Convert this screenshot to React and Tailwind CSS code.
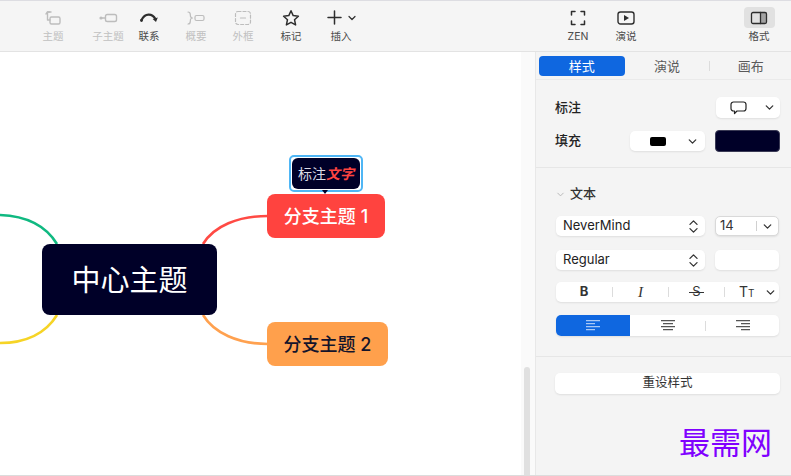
import { ChevronDown, ChevronsUpDown } from 'lucide-react';

function ToolItem({ label, dim, active, className = '', children }) {
  return (
    <div className={`w-10 shrink-0 flex flex-col items-center pt-[6px] ${className}`}>
      <div className={`w-[31px] h-[21px] flex items-center justify-center rounded ${active ? 'bg-[#e1e1e1]' : ''} ${dim ? 'text-[#bdbdbd]' : 'text-[#2e2e2e]'}`}>
        {children}
      </div>
      <span className={`mt-[2px] whitespace-nowrap text-[10.5px] leading-[14px] ${dim ? 'text-[#c0c0c0]' : 'text-[#4a4a4a]'}`}>{label}</span>
    </div>
  );
}

const Svg = ({ w = 18, h = 18, sw = 1.4, children }) => (
  <svg width={w} height={h} viewBox={`0 0 ${w} ${h}`} fill="none" stroke="currentColor" strokeWidth={sw} strokeLinecap="round" strokeLinejoin="round">
    {children}
  </svg>
);

function SelectBox({ className = '', children }) {
  return (
    <div className={`flex items-center bg-white rounded-[5px] shadow-[0_1px_2px_rgba(0,0,0,0.09)] ${className}`}>
      {children}
    </div>
  );
}

const Chev = ({ className = '' }) => <ChevronDown size={13} strokeWidth={2.4} className={`text-[#333] ${className}`} />;

const Updown = () => <ChevronsUpDown size={17} strokeWidth={1.8} className="ml-auto mr-[3px] text-[#333]" />;

const Sep = () => <div className="w-px h-[10px] bg-[#dcdcdc] shrink-0" />;

function AlignIcon({ lines, color }) {
  return (
    <svg width="16" height="11" viewBox="0 0 16 11" stroke={color} strokeWidth="1.2">
      {lines.map(([x1, x2], i) => (
        <line key={i} x1={x1} x2={x2} y1={0.6 + i * 3} y2={0.6 + i * 3} />
      ))}
    </svg>
  );
}

function MindMap() {
  return (
    <div className="relative flex-1 bg-white overflow-hidden">
      <svg className="absolute left-0 top-0" width="300" height="424" fill="none" strokeWidth="2.6">
        <path d="M57 192 C46 174 26 164 0 163" stroke="#10b981" />
        <path d="M57 263 C46 281 26 291 0 291" stroke="#f6d426" />
        <path d="M203 192 C214 174 238 164 268 164" stroke="#ff4a44" />
        <path d="M203 263 C214 281 238 292 268 292" stroke="#ffa14f" />
      </svg>

      <div className="absolute left-[42px] top-[192px] w-[175px] h-[71px] pt-[2px] rounded-[8px] bg-[#000028] flex items-center justify-center text-white text-[29px] leading-none">
        中心主题
      </div>
      <div className="absolute left-[267px] top-[142px] w-[118px] h-[44px] rounded-[8px] bg-[#ff433f] flex items-center justify-center text-white text-[18px] font-medium whitespace-nowrap">
        分支主题 1
      </div>
      <div className="absolute left-[267px] top-[270px] w-[121px] h-[44px] rounded-[8px] bg-[#ffa04c] flex items-center justify-center text-[#14142b] text-[18px] font-medium whitespace-nowrap">
        分支主题 2
      </div>

      {/* callout */}
      <div className="absolute left-[289px] top-[103px] w-[74px] h-[37px] rounded-[5px] border-2 border-[#4fb6f5] bg-white p-[1px]">
        <div className="w-full h-full rounded-[6px] bg-[#000028] flex items-center justify-center text-[14px] whitespace-nowrap">
          <span className="text-[#dcdce6]">标注</span>
          <span className="text-[#ff4440] font-bold italic">文字</span>
        </div>
      </div>
      <div className="absolute left-[322px] top-[138px] w-0 h-0 border-x-[3px] border-x-transparent border-t-[4px] border-t-[#000028]" />
    </div>
  );
}

export default function App() {
  return (
    <div className="w-[791px] h-[476px] flex flex-col overflow-hidden bg-white font-['Inter','Noto_Sans_CJK_SC',sans-serif] border-b border-[#dcdcdc]">
      {/* toolbar */}
      <div className="h-[52px] shrink-0 flex pl-[33px] bg-[#f5f5f5] border-t border-[#dddde2] border-b border-b-[#e3e3e3]">
        <ToolItem label="主题" dim>
          <Svg>
            <path d="M7 3 H3.5 V11 H6" />
            <path d="M2 5 L3.5 3 L5.5 3" />
            <rect x="6" y="8" width="10" height="7" rx="1.5" />
          </Svg>
        </ToolItem>
        <ToolItem label="子主题" dim className="ml-[15px]">
          <Svg w={20}>
            <circle cx="3" cy="9" r="1.6" fill="currentColor" stroke="none" />
            <line x1="4" y1="9" x2="7" y2="9" />
            <rect x="7.5" y="5.5" width="11" height="7" rx="1.8" />
          </Svg>
        </ToolItem>
        <ToolItem label="联系" className="ml-[1px]">
          <Svg w={20} sw={2.2}>
            <path d="M2.5 11 C6 4 13 4 16.5 10" />
            <path d="M13.6 10 L17 13 L18.8 8.6 Z" fill="currentColor" stroke="none" />
            <circle cx="2.5" cy="11.5" r="1.4" fill="currentColor" stroke="none" />
          </Svg>
        </ToolItem>
        <ToolItem label="概要" dim className="ml-[7px]">
          <Svg w={20} sw={1.2}>
            <path d="M2 3 C5 3 4 5 4.5 7.5 C4.8 8.6 5.5 9 6.5 9 C5.5 9 4.8 9.4 4.5 10.5 C4 13 5 15 2 15" />
            <rect x="9" y="6.5" width="9" height="5" rx="1.5" />
          </Svg>
        </ToolItem>
        <ToolItem label="外框" dim className="ml-[7px]">
          <Svg sw={1.2}>
            <rect x="1.5" y="2.5" width="15" height="13" rx="2.5" strokeDasharray="3 2" />
            <line x1="6.5" y1="9" x2="11.5" y2="9" />
          </Svg>
        </ToolItem>
        <ToolItem label="标记" className="ml-[8px]">
          <Svg sw={1.5}>
            <path d="M9 1.8 L11.2 6.6 L16.4 7.2 L12.5 10.7 L13.6 15.9 L9 13.3 L4.4 15.9 L5.5 10.7 L1.6 7.2 L6.8 6.6 Z" />
          </Svg>
        </ToolItem>
        <ToolItem label="插入" className="ml-[10px]">
          <div className="flex items-center gap-[4px] ml-[3px]">
            <Svg w={15} h={15} sw={1.5}>
              <line x1="7.5" y1="1" x2="7.5" y2="14" />
              <line x1="1" y1="7.5" x2="14" y2="7.5" />
            </Svg>
            <ChevronDown size={12} strokeWidth={2.4} />
          </div>
        </ToolItem>
        <ToolItem label="ZEN" className="ml-[197px]">
          <Svg sw={1.5}>
            <path d="M6 2.5 H2.5 V6 M12 2.5 H15.5 V6 M6 15.5 H2.5 V12 M12 15.5 H15.5 V12" />
          </Svg>
        </ToolItem>
        <ToolItem label="演说" className="ml-[8px]">
          <Svg>
            <rect x="1" y="3" width="16" height="12" rx="2.5" />
            <path d="M7 6 L12 9 L7 12 Z" fill="currentColor" stroke="none" />
          </Svg>
        </ToolItem>
        <ToolItem label="格式" active className="ml-[93px]">
          <Svg sw={1.3}>
            <rect x="1.5" y="3.5" width="15" height="11" rx="1.5" />
            <rect x="10.5" y="3.5" width="6" height="11" fill="currentColor" stroke="none" opacity="0.35" />
            <line x1="10.5" y1="3.5" x2="10.5" y2="14.5" />
          </Svg>
        </ToolItem>
      </div>

      <div className="flex flex-1 min-h-0">
        <MindMap />

        {/* gutter with scrollbar */}
        <div className="w-[14px] shrink-0 bg-[#fafafa] flex flex-col justify-end pl-[3px]">
          <div className="w-[6px] h-[108px] rounded-t-[3px] bg-[#e0e0e0]" />
        </div>

        {/* format panel */}
        <div className="w-[256px] shrink-0 bg-[#f4f4f4] border-l border-[#e8e8e8]">
          <div className="h-[28px] flex items-start pt-[4px] pl-[3px] border-b border-[#eaeaea] text-[13px] leading-[20px] text-[#5a5a5a]">
            <div className="w-[86px] h-[20px] rounded-[4px] bg-[#0f67e0] text-white text-center">样式</div>
            <div className="w-[85px] text-center">演说</div>
            <div className="w-px h-[10px] mt-[5px] bg-[#dcdcdc]" />
            <div className="w-[81px] text-center">画布</div>
          </div>

          <div className="pl-[19px] pr-[11px] pt-[17px] pb-[15px] border-b border-[#e6e6e6]">
            <div className="flex items-center h-[21px]">
              <span className="text-[13px] font-medium text-[#222]">标注</span>
              <SelectBox className="ml-auto w-[64px] h-[21px] pl-[14px]">
                <svg width="17" height="14" viewBox="0 0 17 14" fill="none" stroke="#222" strokeWidth="1.2" strokeLinejoin="round">
                  <path d="M3.5 1 H13.5 A2.5 2.5 0 0 1 16 3.5 V7.5 A2.5 2.5 0 0 1 13.5 10 H7 L4.5 12.5 V10 H3.5 A2.5 2.5 0 0 1 1 7.5 V3.5 A2.5 2.5 0 0 1 3.5 1 Z" />
                </svg>
                <Chev className="ml-auto mr-[4px]" />
              </SelectBox>
            </div>
            <div className="flex items-center h-[22px] mt-[12px]">
              <span className="text-[13px] font-medium text-[#222]">填充</span>
              <SelectBox className="ml-auto w-[75px] h-[20px] pl-[20px]">
                <div className="w-[16px] h-[9px] rounded-[2px] bg-black" />
                <Chev className="ml-auto mr-[6px]" />
              </SelectBox>
              <div className="ml-[10px] w-[65px] h-[22px] rounded-[4px] bg-[#000028] border border-[#3a3a55]" />
            </div>
          </div>

          <div className="pl-[20px] pr-[11px] pt-[16px] pb-[20px] border-b border-[#e6e6e6]">
            <div className="flex items-center h-[20px] -ml-[1px]">
              <ChevronDown size={11} strokeWidth={2} className="text-[#b5b5b5]" />
              <span className="ml-[4px] text-[13px] font-medium text-[#333]">文本</span>
            </div>

            <div className="flex mt-[12px] h-[20px]">
              <SelectBox className="w-[149px] pl-[7px] text-[13px] text-[#222]">
                NeverMind
                <Updown />
              </SelectBox>
              <SelectBox className="ml-[10px] w-[64px] pl-[4px] text-[13px] text-[#333] border border-[#d9d9d9]">
                14
                <div className="ml-auto w-px h-[10px] bg-[#d0d0d0]" />
                <Chev className="mx-[4px]" />
              </SelectBox>
            </div>

            <div className="flex mt-[14px] h-[20px]">
              <SelectBox className="w-[149px] pl-[7px] text-[13px] text-[#222]">
                Regular
                <Updown />
              </SelectBox>
              <SelectBox className="ml-[10px] w-[64px]" />
            </div>

            <SelectBox className="mt-[12px] h-[20px] w-[223px] text-[#333]">
              <div className="w-[56px] text-center text-[13px] font-bold">B</div>
              <Sep />
              <div className="w-[55px] text-center text-[15px] italic font-['Liberation_Serif',serif]">I</div>
              <Sep />
              <div className="relative w-[55px] text-center text-[13px]">
                S
                <div className="absolute left-[20px] top-[10px] w-[15px] h-px bg-[#333]" />
              </div>
              <Sep />
              <div className="flex-1 flex items-center pl-[14px] text-[14px] leading-none">
                T<span className="text-[10px] mt-[2px]">T</span>
                <Chev className="ml-auto mr-[2px]" />
              </div>
            </SelectBox>

            <SelectBox className="mt-[13px] h-[21px] w-[223px] overflow-hidden">
              <div className="w-[74px] h-full bg-[#0f67e0] flex items-center justify-center">
                <AlignIcon color="#a9c8f5" lines={[[1, 15], [1, 10], [1, 15], [1, 10]]} />
              </div>
              <div className="w-[75px] flex justify-center">
                <AlignIcon color="#555" lines={[[1, 15], [3, 13], [1, 15], [3, 13]]} />
              </div>
              <Sep />
              <div className="flex-1 flex justify-center">
                <AlignIcon color="#555" lines={[[1, 15], [6, 15], [1, 15], [6, 15]]} />
              </div>
            </SelectBox>
          </div>

          <div className="relative pl-[19px] pr-[11px] pt-[16px]">
            <SelectBox className="h-[21px] justify-center text-[12.5px] text-[#333]">重设样式</SelectBox>
            {/* site watermark over the panel */}
            <div className="absolute left-[143px] top-[68px] text-[31px] leading-[36px] whitespace-nowrap text-[#8000ff]">
              最需网
            </div>
          </div>
        </div>
      </div>
    </div>
  );
}
